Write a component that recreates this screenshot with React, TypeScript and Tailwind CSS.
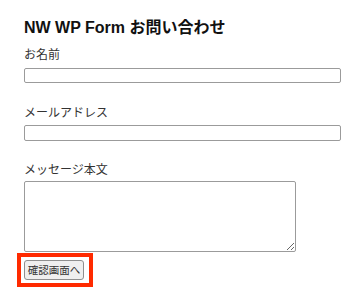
import React from 'react';

const font = { fontFamily: '"Liberation Sans", "Noto Sans CJK JP", sans-serif' };

export default function App() {
  return (
    <div className="min-h-screen bg-white text-[#222]" style={font}>
      <div className="pl-[24px] pt-[17px]">
        <h2 className="text-[16px] leading-[22px] font-bold text-[#111]">NW WP Form お問い合わせ</h2>

        <form className="mt-[8px]">
          <label className="block text-[12px] leading-[16px] text-[#333]">お名前</label>
          <input type="text" className="block mt-[5px] w-[317px] h-[15px] border border-[#9b9b9b] rounded-[2px] bg-white" />

          <label className="block mt-[22px] text-[12px] leading-[16px] text-[#333]">メールアドレス</label>
          <input type="email" className="block mt-[4px] w-[317px] h-[16px] border border-[#9b9b9b] rounded-[2px] bg-white" />

          <label className="block mt-[21px] text-[12px] leading-[16px] text-[#333]">メッセージ本文</label>
          <textarea className="block mt-[3px] w-[272px] h-[71px] border border-[#9b9b9b] rounded-[2px] bg-white resize" />

          <div className="mt-[1px] -ml-[7px] w-fit border-[4px] border-[#ff2a00] pt-[3px] pb-[3px] pl-[3px] pr-[5px]">
            <button type="button" className="block h-[20px] w-[60px] px-0 whitespace-nowrap border border-[#8f8f8f] rounded-[3px] bg-[#efefef] text-[10.5px] leading-[18px] text-[#333]">
              確認画面へ
            </button>
          </div>
        </form>
      </div>
    </div>
  );
}
